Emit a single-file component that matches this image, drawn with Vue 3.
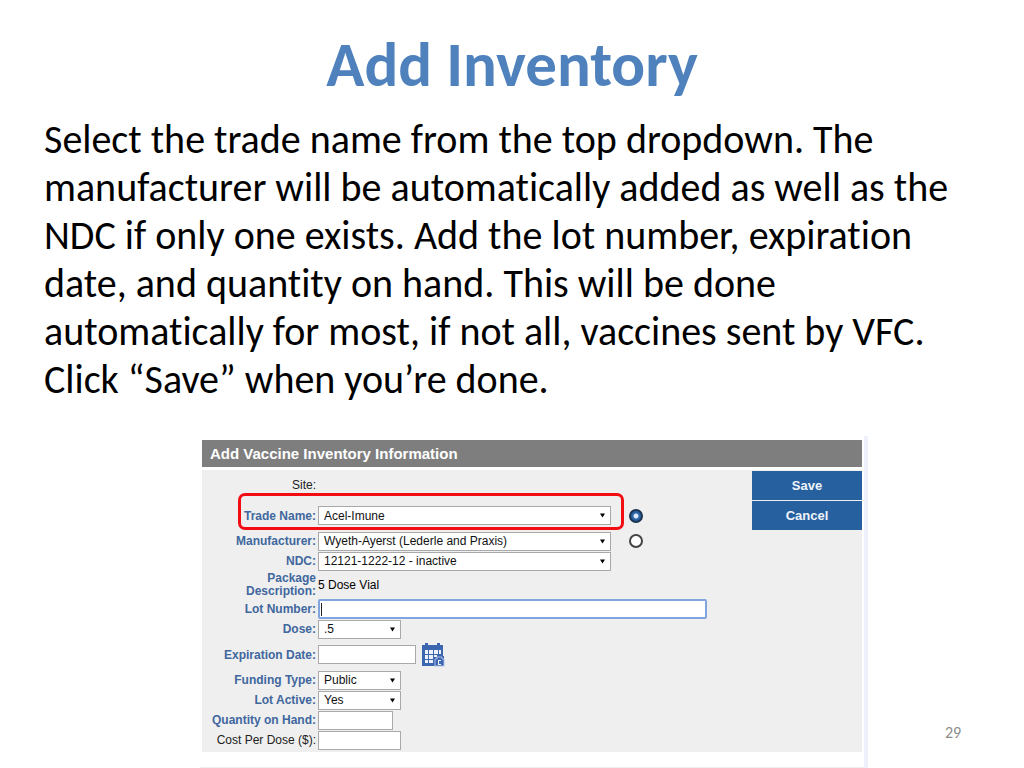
<template>
  <main class="slide">
    <h1>Add Inventory</h1>
    <p class="intro">
      <span v-for="line in intro" :key="line">{{ line }}</span>
    </p>

    <div class="figure-row">
      <section class="panel">
        <h2>Add Vaccine Inventory Information</h2>
        <form class="panel-body" @submit.prevent>
          <div class="fields">
            <div class="row site">
              <span class="label plain">Site:</span>
            </div>

            <div class="row tall highlighted">
              <label for="trade">Trade Name:</label>
              <span class="select wide">
                <select id="trade" v-model="form.trade">
                  <option>Acel-Imune</option>
                </select>
                <svg viewBox="0 0 6 6"><path d="M0 0.5h6L3 5.5z" /></svg>
              </span>
              <input v-model="form.source" type="radio" name="source" value="trade" aria-label="Choose by trade name" />
            </div>

            <div class="row">
              <label for="manufacturer">Manufacturer:</label>
              <span class="select wide">
                <select id="manufacturer" v-model="form.manufacturer">
                  <option>Wyeth-Ayerst (Lederle and Praxis)</option>
                </select>
                <svg viewBox="0 0 6 6"><path d="M0 0.5h6L3 5.5z" /></svg>
              </span>
              <input v-model="form.source" type="radio" name="source" value="manufacturer" aria-label="Choose by manufacturer" />
            </div>

            <div class="row">
              <label for="ndc">NDC:</label>
              <span class="select wide">
                <select id="ndc" v-model="form.ndc">
                  <option>12121-1222-12 - inactive</option>
                </select>
                <svg viewBox="0 0 6 6"><path d="M0 0.5h6L3 5.5z" /></svg>
              </span>
            </div>

            <div class="row double">
              <span class="label">Package<br />Description:</span>
              <span>5 Dose Vial</span>
            </div>

            <div class="row">
              <label for="lot">Lot Number:</label>
              <span class="lot">
                <input id="lot" v-model="form.lot" type="text" />
                <i class="caret"></i>
              </span>
            </div>

            <div class="row">
              <label for="dose">Dose:</label>
              <span class="select">
                <select id="dose" v-model="form.dose">
                  <option>.5</option>
                </select>
                <svg viewBox="0 0 6 6"><path d="M0 0.5h6L3 5.5z" /></svg>
              </span>
            </div>

            <div class="row tall">
              <label for="expiration">Expiration Date:</label>
              <input id="expiration" v-model="form.expiration" class="date" type="text" />
              <button class="calendar" type="button" aria-label="Pick a date">
                <svg viewBox="0 0 24 24">
                  <path class="ink" d="M1 2h3V0h3v2h9V0h3v2h3v11h1v10H1z" />
                  <path class="cell" d="M4 7h3v4H4zM8 7h4v4H8zM13 7h4v4h-4zM18 7h2v4h-2zM4 12h3v4H4zM8 12h4v4H8zM13 12h3v2h-3zM4 17h3v3H4zM8 17h4v3H8z" />
                  <path class="trim" d="M14 23v-7h2v-2h5v2h2v7z" />
                  <path class="cell" d="M17 17h3v1h-2v3h2v1h-3z" />
                </svg>
              </button>
            </div>

            <div class="row">
              <label for="funding">Funding Type:</label>
              <span class="select">
                <select id="funding" v-model="form.funding">
                  <option>Public</option>
                </select>
                <svg viewBox="0 0 6 6"><path d="M0 0.5h6L3 5.5z" /></svg>
              </span>
            </div>

            <div class="row">
              <label for="active">Lot Active:</label>
              <span class="select">
                <select id="active" v-model="form.active">
                  <option>Yes</option>
                </select>
                <svg viewBox="0 0 6 6"><path d="M0 0.5h6L3 5.5z" /></svg>
              </span>
            </div>

            <div class="row">
              <label for="quantity">Quantity on Hand:</label>
              <input id="quantity" v-model="form.quantity" class="short" type="text" />
            </div>

            <div class="row">
              <label for="cost" class="plain">Cost Per Dose ($):</label>
              <input id="cost" v-model="form.cost" type="text" />
            </div>
          </div>

          <div class="actions">
            <button type="submit">Save</button>
            <button type="button">Cancel</button>
          </div>
        </form>
      </section>
      <span class="page-number">29</span>
    </div>
  </main>
</template>

<script setup>
import { reactive } from 'vue'

const intro = [
  'Select the trade name from the top dropdown. The',
  'manufacturer will be automatically added as well as the',
  'NDC if only one exists. Add the lot number, expiration',
  'date, and quantity on hand. This will be done',
  'automatically for most, if not all, vaccines sent by VFC.',
  'Click “Save” when you’re done.',
]

const form = reactive({
  trade: 'Acel-Imune',
  source: 'trade',
  manufacturer: 'Wyeth-Ayerst (Lederle and Praxis)',
  ndc: '12121-1222-12 - inactive',
  lot: '',
  dose: '.5',
  expiration: '',
  funding: 'Public',
  active: 'Yes',
  quantity: '',
  cost: '',
})
</script>

<style>
body {
  margin: 0;
  background: #fff;
}
</style>

<style scoped>
* {
  box-sizing: border-box;
}

.slide {
  padding-top: 26px;
  font-family: Carlito, Lato, sans-serif;
  font-variant-ligatures: none;
  color: #000;
}

h1 {
  margin: 0;
  color: #4f81bd;
  font-size: 63px;
  line-height: 78px;
  text-align: center;
}

.intro {
  margin: 12px 0 0;
  padding-left: 44px;
  font-size: 40px;
  line-height: 48px;
}

.intro span {
  display: block;
}

.figure-row {
  display: grid;
  grid-template-columns: 1fr 156px;
  align-items: end;
  margin-top: 32px;
  padding-left: 200px;
}

.panel {
  padding: 4px 2px 15px;
  border-right: 4px solid #eef0fb;
  border-bottom: 1px solid #eeeef2;
  font-family: 'Liberation Sans', Arial, sans-serif;
  font-size: 12px;
}

h2 {
  margin: 0 0 3px;
  padding-left: 8px;
  background: #7e7e7e;
  color: #fff;
  font-size: 15px;
  line-height: 27px;
}

.panel-body {
  display: flex;
  justify-content: space-between;
  padding-bottom: 2px;
  background: #efefef;
}

.row {
  display: flex;
  align-items: center;
  gap: 2px;
  height: 20px;
}

.row.site {
  height: 30px;
}

.row.tall {
  height: 31px;
}

.row.double {
  height: 28px;
  line-height: 13px;
}

label,
.label {
  width: 114px;
  flex-shrink: 0;
  color: #40679e;
  font-weight: bold;
  text-align: right;
  white-space: nowrap;
}

.plain {
  color: #222;
  font-weight: normal;
}

.highlighted {
  position: relative;
}

/* red call-out round the first drop-down */
.highlighted::after {
  content: '';
  position: absolute;
  box-sizing: border-box;
  inset: -7px auto 1px 36px;
  width: 386px;
  border: 3px solid #f20d12;
  border-radius: 7px;
  pointer-events: none;
}

select,
input[type='text'] {
  display: block;
  width: 83px;
  height: 19px;
  margin: 0;
  border: 1px solid #a9a9a9;
  border-radius: 0;
  background: #fff;
  color: #111;
  font: inherit;
}

select {
  padding: 0 5px;
  appearance: none;
}

.select {
  position: relative;
}

.select.wide select {
  width: 293px;
}

.select svg {
  position: absolute;
  top: 7px;
  right: 6px;
  width: 5px;
  height: 5px;
}

input[type='radio'] {
  width: 14px;
  height: 14px;
  margin: 0 0 0 16px;
  border: 2px solid #444;
  border-radius: 50%;
  background: #fff;
  appearance: none;
}

input[type='radio']:checked {
  border-color: #1c3552;
  background: radial-gradient(#dce9f7 0 2px, #2a62a5 3px);
}

.lot {
  position: relative;
}

.lot input[type='text'] {
  width: 389px;
  height: 20px;
  border: 2px solid #82a5e0;
  border-radius: 2px;
  outline: none;
}

.caret {
  position: absolute;
  top: 4px;
  left: 3px;
  width: 1px;
  height: 13px;
  background: #222;
}

input[type='text'].date {
  width: 98px;
}

input[type='text'].short {
  width: 75px;
}

.calendar {
  margin-left: 3px;
  padding: 0;
  border: 0;
  background: none;
}

.calendar svg {
  display: block;
  width: 24px;
  height: 24px;
}

.ink {
  fill: #3c66b0;
}

.cell {
  fill: #eef2fa;
}

.trim {
  fill: #3c66b0;
  stroke: #a9bfe4;
}

.actions {
  display: flex;
  flex-direction: column;
  gap: 1px;
  width: 110px;
  padding-top: 1px;
}

.actions button {
  height: 29px;
  padding: 0;
  border: 0;
  background: #27609f;
  color: #eef4fb;
  font: bold 13px 'Liberation Sans', Arial, sans-serif;
}

.page-number {
  padding: 0 0 25px 77px;
  color: #8b8b8b;
  font-size: 16px;
  line-height: 20px;
}
</style>
